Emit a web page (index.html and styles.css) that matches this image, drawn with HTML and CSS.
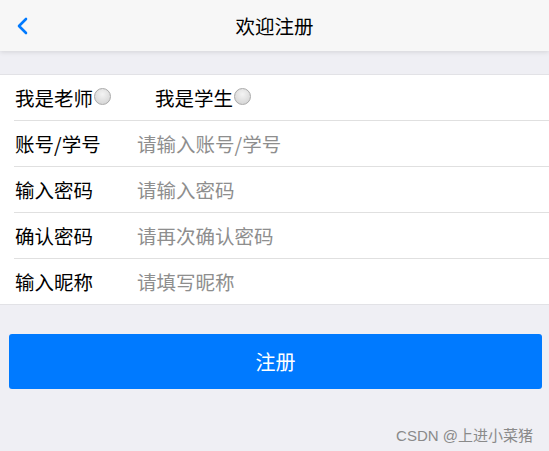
FILE: index.html
```html
<!DOCTYPE html>
<html lang="zh-CN">

<head>
    <meta charset="UTF-8">
    <title>欢迎注册</title>
    <link rel="stylesheet" href="styles.css">
</head>

<body>

    <header class="bar">
        <a class="back" href="#">
            <svg width="12" height="18" viewBox="0 0 12 18">
                <path d="M10 2 L3 9 L10 16" fill="none" stroke="#007aff" stroke-width="2.6" stroke-linecap="round" stroke-linejoin="round"/>
            </svg>
        </a>
        <h1 class="title">欢迎注册</h1>
    </header>

    <div class="content">
        <form class="form">
            <div class="row roles">
                <label class="role">我是老师<input type="radio" name="role"><span class="dot"></span></label>
                <label class="role">我是学生<input type="radio" name="role"><span class="dot"></span></label>
            </div>
            <div class="row">
                <label class="label">账号/学号</label>
                <input class="field" type="text" placeholder="请输入账号/学号">
            </div>
            <div class="row">
                <label class="label">输入密码</label>
                <input class="field" type="password" placeholder="请输入密码">
            </div>
            <div class="row">
                <label class="label">确认密码</label>
                <input class="field" type="password" placeholder="请再次确认密码">
            </div>
            <div class="row">
                <label class="label">输入昵称</label>
                <input class="field" type="text" placeholder="请填写昵称">
            </div>
        </form>

        <button class="submit" type="button">注册</button>

        <div class="mark">CSDN @上进小菜猪</div>
    </div>

</body>

</html>
```

FILE: styles.css
```css
html, body {
  margin: 0;
  padding: 0;
  background: #efeff4;
  font-family: "Noto Sans CJK SC", "Liberation Sans", sans-serif;
  color: #000;
}

.bar {
  position: relative;
  height: 51px;
  background: #f7f7f7;
  box-shadow: 0 1px 5px rgba(0,0,0,0.12);
  display: flex;
  align-items: center;
  justify-content: center;
}

.back {
  position: absolute;
  left: 16px;
  top: 16px;
  display: block;
}

.title {
  margin: 0;
  font-size: 19.5px;
  font-weight: normal;
  color: #000;
}

.content {
  padding-top: 23px;
}

.form {
  margin: 0;
  background: #fff;
  border-top: 1px solid #e2e2e6;
  border-bottom: 1px solid #e2e2e6;
}

.row {
  height: 45px;
  margin-left: 14px;
  display: flex;
  align-items: center;
  border-bottom: 1px solid #e0e0e0;
}

.row:last-child {
  border-bottom: none;
}

.label {
  width: 122px;
  padding-left: 1px;
  font-size: 19.5px;
}

.field {
  flex: 1;
  border: none;
  outline: none;
  padding: 0;
  font-size: 19.5px;
  font-family: inherit;
  background: transparent;
}

.field::placeholder {
  color: #8e8e8e;
}

.role {
  display: flex;
  align-items: center;
  padding-left: 1px;
  font-size: 19.5px;
  margin-right: 43px;
}

.role input {
  display: none;
}

.dot {
  width: 15px;
  height: 15px;
  border-radius: 50%;
  border: 1px solid #aaa;
  background: radial-gradient(circle at 50% 35%, #f4f4f4, #cfcfcf);
  margin-left: 1px;
  margin-top: -2px;
}

.submit {
  display: block;
  margin: 29px 7px 0 9px;
  width: 533px;
  height: 55px;
  border: none;
  border-radius: 3px;
  background: #007aff;
  color: #fff;
  font-size: 20px;
  font-family: inherit;
}

.mark {
  text-align: right;
  padding: 35px 16px 0 0;
  font-family: "Liberation Sans", "Noto Sans CJK SC", sans-serif;
  font-size: 15px;
  color: #8a8a8a;
}
```
